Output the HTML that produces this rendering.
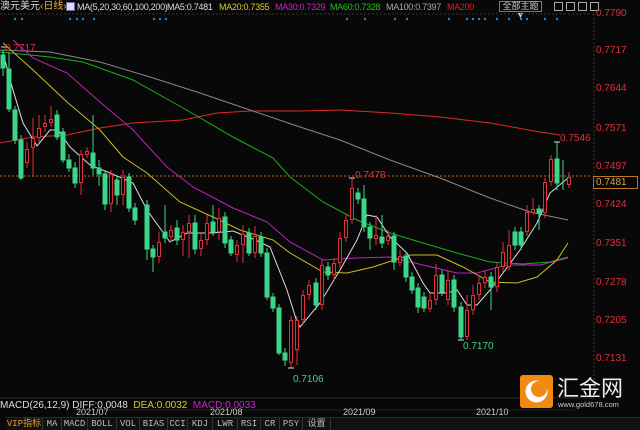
<!DOCTYPE html>
<html><head><meta charset="utf-8"><style>
*{margin:0;padding:0;box-sizing:border-box}
body{width:640px;height:430px;background:#080808;overflow:hidden;position:relative;font-family:"Liberation Sans","Noto Sans CJK SC",sans-serif}
.t{position:absolute;white-space:nowrap;font-size:10px;line-height:12px}
.h{position:absolute;white-space:nowrap;font-size:9px;letter-spacing:-0.3px;line-height:12px;top:1px}
.ax{position:absolute;left:596px;font-size:10px;color:#e0303a;line-height:12px}
.tab{position:absolute;top:418px;height:12px;font-size:9px;line-height:12px;color:#bbb;text-align:center;border-right:1px solid #333;font-family:"Liberation Mono","Noto Sans CJK SC",monospace}
</style></head><body>
<div class="t" style="left:0;top:1px;color:#ddd">澳元美元<span style="color:#e8b040">‹日线›</span></div>
<div style="position:absolute;left:66px;top:2px;width:9px;height:9px;background:#dde;border:1px solid #66a"></div>
<div class="h" style="left:77px;color:#ddd">MA(5,20,30,60,100,200)</div>
<div class="h" style="left:167px;color:#ddd">MA5:0.7481</div>
<div class="h" style="left:219px;color:#d8d020">MA20:0.7355</div>
<div class="h" style="left:275px;color:#d020d0">MA30:0.7329</div>
<div class="h" style="left:330px;color:#20c020">MA60:0.7328</div>
<div class="h" style="left:386px;color:#aaa">MA100:0.7397</div>
<div class="h" style="left:447px;color:#e02020">MA200</div>
<div style="position:absolute;left:499px;top:1px;width:43px;height:11px;border:1px solid #777;color:#ccc;font-size:9px;line-height:9px;text-align:center">全部主题▼</div>
<div style="position:absolute;left:554px;top:2px;width:9px;height:9px;border:1px solid #aaa"></div>
<div style="position:absolute;left:566px;top:2px;width:9px;height:9px;border:1px solid #aaa"></div>
<div style="position:absolute;left:578px;top:2px;width:9px;height:9px;border:1px solid #aaa"></div>
<div style="position:absolute;left:590px;top:2px;width:9px;height:9px;border:1px solid #aaa"></div>

<div class="ax" style="top:8px">0.7790</div>
<div class="ax" style="top:45px">0.7717</div>
<div class="ax" style="top:83px">0.7644</div>
<div class="ax" style="top:123px">0.7571</div>
<div class="ax" style="top:161px">0.7497</div>
<div class="ax" style="top:199px">0.7424</div>
<div class="ax" style="top:238px">0.7351</div>
<div class="ax" style="top:277px">0.7278</div>
<div class="ax" style="top:315px">0.7205</div>
<div class="ax" style="top:353px">0.7131</div>
<div style="position:absolute;left:593px;top:176px;width:45px;height:13px;border:1px solid #c07820;color:#e0a040;font-size:10px;line-height:11px;padding-left:2px;background:#080808">0.7481</div>

<svg style="position:absolute;left:0;top:0" width="640" height="430">
<line x1="0" y1="14" x2="594" y2="14" stroke="#333" stroke-dasharray="2,2"/>
<line x1="594" y1="14" x2="594" y2="398" stroke="#333" stroke-dasharray="2,2"/>
<g fill="#1a8ad8">
<circle cx="15" cy="19" r="1.2"/><circle cx="22" cy="19" r="1.2"/><circle cx="70" cy="19" r="1.2"/><circle cx="77" cy="19" r="1.2"/><circle cx="83" cy="19" r="1.2"/><circle cx="94" cy="19" r="1.2"/><circle cx="154" cy="19" r="1.2"/><circle cx="160" cy="19" r="1.2"/><circle cx="166" cy="19" r="1.2"/>
<circle cx="347" cy="19" r="1.2"/><circle cx="365" cy="19" r="1.2"/><circle cx="395" cy="19" r="1.2"/><circle cx="407" cy="19" r="1.2"/><circle cx="449" cy="19" r="1.2"/><circle cx="467" cy="19" r="1.2"/><circle cx="473" cy="19" r="1.2"/><circle cx="479" cy="19" r="1.2"/><circle cx="485" cy="19" r="1.2"/><circle cx="497" cy="19" r="1.2"/><circle cx="509" cy="19" r="1.2"/><circle cx="521" cy="19" r="1.2"/><circle cx="527" cy="19" r="1.2"/><circle cx="545" cy="19" r="1.2"/><circle cx="557" cy="19" r="1.2"/>
</g>
<line x1="0" y1="176" x2="592" y2="176" stroke="#c06a20" stroke-dasharray="2,2"/>
<g fill="none" stroke-width="1">
<polyline stroke="#e02828" points="0,143 33,137 67,135 100,128 133,123 183,120 217,113 250,111 300,111 340,110 390,113 440,117 490,123 540,132 560,135"/>
<polyline stroke="#888" points="0,50 50,52 100,62 150,77 200,93 250,110 300,127 340,140 390,160 440,178 490,198 530,212 568,220"/>
<polyline stroke="#18b018" points="0,52 50,57 83,62 133,80 183,108 233,137 273,158 290,177 323,202 357,220 390,233 423,243 457,253 490,262 523,264 550,262 568,257"/>
<polyline stroke="#c020c0" points="13,40 33,58 67,73 100,102 133,130 167,167 193,187 233,208 267,222 290,242 323,260 357,258 390,257 423,265 457,273 477,273 507,265 540,265 568,258"/>
<polyline stroke="#c8c020" points="3,43 33,70 67,102 100,130 123,157 147,173 180,202 213,217 240,230 273,240 290,253 323,272 347,273 373,267 410,255 437,255 463,267 490,282 517,283 537,277 557,260 568,243"/>
<polyline stroke="#ddd" points="3,53 13,90 23,123 37,146 50,130 58,130 70,147 90,165 110,173 133,183 147,210 170,242 187,233 213,233 233,231 253,239 270,247 287,290 297,322 300,327 320,303 340,270 357,240 367,215 377,217 390,237 407,253 423,283 430,293 447,293 457,290 467,305 477,305 490,290 503,273 520,250 537,223 550,193 568,178"/>
</g>
<g stroke-width="1">
<g stroke="#3cd68a" fill="#3cd68a">
<line x1="3" y1="50" x2="3" y2="76"/><rect x="1" y="55" width="4" height="13"/>
<line x1="9" y1="52" x2="9" y2="112"/><rect x="7" y="69" width="4" height="40"/>
<line x1="15" y1="106" x2="15" y2="144"/><rect x="13" y="110" width="4" height="30"/>
<line x1="21" y1="135" x2="21" y2="180"/><rect x="19" y="140" width="4" height="38"/>
<line x1="57" y1="110" x2="57" y2="140"/><rect x="55" y="115" width="4" height="22"/>
<line x1="63" y1="128" x2="63" y2="163"/><rect x="61" y="132" width="4" height="28"/>
<line x1="69" y1="154" x2="69" y2="172"/><rect x="67" y="160" width="4" height="8"/>
<line x1="75" y1="162" x2="75" y2="188"/><rect x="73" y="168" width="4" height="15"/>
<line x1="93" y1="115" x2="93" y2="175"/><rect x="91" y="153" width="4" height="15"/>
<line x1="99" y1="160" x2="99" y2="186"/><rect x="97" y="168" width="4" height="6"/>
<line x1="105" y1="170" x2="105" y2="210"/><rect x="103" y="174" width="4" height="30"/>
<line x1="117" y1="176" x2="117" y2="205"/><rect x="115" y="180" width="4" height="15"/>
<line x1="129" y1="173" x2="129" y2="212"/><rect x="127" y="177" width="4" height="31"/>
<line x1="135" y1="203" x2="135" y2="225"/><rect x="133" y="208" width="4" height="12"/>
<line x1="147" y1="200" x2="147" y2="260"/><rect x="145" y="205" width="4" height="44"/>
<line x1="153" y1="245" x2="153" y2="272"/><rect x="151" y="249" width="4" height="8"/>
<line x1="165" y1="205" x2="165" y2="243"/><rect x="163" y="232" width="4" height="6"/>
<line x1="177" y1="220" x2="177" y2="245"/><rect x="175" y="228" width="4" height="12"/>
<line x1="195" y1="215" x2="195" y2="254"/><rect x="193" y="223" width="4" height="26"/>
<line x1="213" y1="205" x2="213" y2="236"/><rect x="211" y="222" width="4" height="10"/>
<line x1="225" y1="212" x2="225" y2="248"/><rect x="223" y="217" width="4" height="26"/>
<line x1="231" y1="236" x2="231" y2="256"/><rect x="229" y="240" width="4" height="13"/>
<line x1="249" y1="228" x2="249" y2="256"/><rect x="247" y="233" width="4" height="20"/>
<line x1="261" y1="232" x2="261" y2="257"/><rect x="259" y="237" width="4" height="16"/>
<line x1="267" y1="248" x2="267" y2="300"/><rect x="265" y="253" width="4" height="44"/>
<line x1="273" y1="293" x2="273" y2="312"/><rect x="271" y="297" width="4" height="11"/>
<line x1="279" y1="304" x2="279" y2="355"/><rect x="277" y="308" width="4" height="45"/>
<line x1="285" y1="348" x2="285" y2="366"/><rect x="283" y="353" width="4" height="7"/>
<line x1="316" y1="278" x2="316" y2="310"/><rect x="314" y="283" width="4" height="22"/>
<line x1="328" y1="262" x2="328" y2="280"/><rect x="326" y="267" width="4" height="8"/>
<line x1="358" y1="188" x2="358" y2="204"/><rect x="356" y="193" width="4" height="6"/>
<line x1="364" y1="185" x2="364" y2="232"/><rect x="362" y="199" width="4" height="28"/>
<line x1="370" y1="222" x2="370" y2="250"/><rect x="368" y="227" width="4" height="11"/>
<line x1="382" y1="215" x2="382" y2="248"/><rect x="380" y="237" width="4" height="6"/>
<line x1="394" y1="232" x2="394" y2="270"/><rect x="392" y="236" width="4" height="26"/>
<line x1="406" y1="252" x2="406" y2="282"/><rect x="404" y="256" width="4" height="21"/>
<line x1="412" y1="272" x2="412" y2="294"/><rect x="410" y="277" width="4" height="13"/>
<line x1="418" y1="283" x2="418" y2="313"/><rect x="416" y="288" width="4" height="19"/>
<line x1="424" y1="292" x2="424" y2="312"/><rect x="422" y="297" width="4" height="11"/>
<line x1="442" y1="270" x2="442" y2="296"/><rect x="440" y="275" width="4" height="17"/>
<line x1="454" y1="275" x2="454" y2="312"/><rect x="452" y="280" width="4" height="27"/>
<line x1="461" y1="302" x2="461" y2="340"/><rect x="459" y="307" width="4" height="30"/>
<line x1="491" y1="272" x2="491" y2="310"/><rect x="489" y="277" width="4" height="10"/>
<line x1="515" y1="227" x2="515" y2="250"/><rect x="513" y="232" width="4" height="13"/>
<line x1="521" y1="227" x2="521" y2="250"/><rect x="519" y="232" width="4" height="13"/>
<line x1="539" y1="205" x2="539" y2="230"/><rect x="537" y="209" width="4" height="4"/>
<line x1="557" y1="142" x2="557" y2="190"/><rect x="555" y="159" width="4" height="24"/>
<line x1="563" y1="160" x2="563" y2="190"/>
</g>
<g stroke="#e0303a" fill="#080808">
<line x1="27" y1="142" x2="27" y2="168"/><rect x="25.5" y="149.5" width="3" height="13"/>
<line x1="33" y1="118" x2="33" y2="177"/><rect x="31.5" y="138.5" width="3" height="9"/>
<line x1="39" y1="115" x2="39" y2="142"/><rect x="37.5" y="128.5" width="3" height="9"/>
<line x1="45" y1="115" x2="45" y2="132"/><rect x="43.5" y="123.5" width="3" height="3"/>
<line x1="51" y1="106" x2="51" y2="127"/><rect x="49.5" y="119.5" width="3" height="3"/>
<line x1="81" y1="150" x2="81" y2="195"/><rect x="79.5" y="154.5" width="3" height="28"/>
<line x1="87" y1="147" x2="87" y2="158"/><rect x="85.5" y="151.5" width="3" height="3"/>
<line x1="111" y1="170" x2="111" y2="212"/><rect x="109.5" y="174.5" width="3" height="29"/>
<line x1="123" y1="170" x2="123" y2="205"/><rect x="121.5" y="177.5" width="3" height="17"/>
<line x1="159" y1="232" x2="159" y2="263"/><rect x="157.5" y="242.5" width="3" height="14"/>
<line x1="171" y1="225" x2="171" y2="242"/><rect x="169.5" y="230.5" width="3" height="6"/>
<line x1="183" y1="225" x2="183" y2="256"/><rect x="181.5" y="232.5" width="3" height="7"/>
<line x1="189" y1="215" x2="189" y2="258"/><rect x="187.5" y="223.5" width="3" height="8"/>
<line x1="201" y1="234" x2="201" y2="256"/><rect x="199.5" y="240.5" width="3" height="8"/>
<line x1="207" y1="215" x2="207" y2="245"/><rect x="205.5" y="223.5" width="3" height="16"/>
<line x1="219" y1="208" x2="219" y2="240"/><rect x="217.5" y="218.5" width="3" height="13"/>
<line x1="237" y1="240" x2="237" y2="262"/><rect x="235.5" y="245.5" width="3" height="9"/>
<line x1="243" y1="225" x2="243" y2="263"/><rect x="241.5" y="234.5" width="3" height="10"/>
<line x1="255" y1="226" x2="255" y2="258"/><rect x="253.5" y="236.5" width="3" height="16"/>
<line x1="291" y1="316" x2="291" y2="368"/><rect x="289.5" y="320.5" width="3" height="42"/>
<line x1="297" y1="316" x2="297" y2="365"/><rect x="295.5" y="320.5" width="3" height="29"/>
<line x1="303" y1="290" x2="303" y2="325"/><rect x="301.5" y="295.5" width="3" height="24"/>
<line x1="309" y1="280" x2="309" y2="300"/><rect x="307.5" y="285.5" width="3" height="9"/>
<line x1="322" y1="260" x2="322" y2="310"/><rect x="320.5" y="265.5" width="3" height="39"/>
<line x1="334" y1="258" x2="334" y2="280"/><rect x="332.5" y="263.5" width="3" height="11"/>
<line x1="340" y1="232" x2="340" y2="268"/><rect x="338.5" y="238.5" width="3" height="24"/>
<line x1="346" y1="214" x2="346" y2="242"/><rect x="344.5" y="220.5" width="3" height="17"/>
<line x1="352" y1="178" x2="352" y2="224"/><rect x="350.5" y="188.5" width="3" height="31"/>
<line x1="376" y1="215" x2="376" y2="245"/><rect x="374.5" y="235.5" width="3" height="3"/>
<line x1="388" y1="230" x2="388" y2="245"/><rect x="386.5" y="236.5" width="3" height="4"/>
<line x1="400" y1="250" x2="400" y2="266"/><rect x="398.5" y="256.5" width="3" height="6"/>
<line x1="430" y1="294" x2="430" y2="312"/><rect x="428.5" y="300.5" width="3" height="8"/>
<line x1="436" y1="264" x2="436" y2="305"/><rect x="434.5" y="275.5" width="3" height="24"/>
<line x1="448" y1="270" x2="448" y2="305"/><rect x="446.5" y="280.5" width="3" height="19"/>
<line x1="467" y1="295" x2="467" y2="340"/><rect x="465.5" y="310.5" width="3" height="26"/>
<line x1="473" y1="285" x2="473" y2="315"/><rect x="471.5" y="295.5" width="3" height="14"/>
<line x1="479" y1="275" x2="479" y2="300"/><rect x="477.5" y="283.5" width="3" height="11"/>
<line x1="485" y1="270" x2="485" y2="288"/><rect x="483.5" y="277.5" width="3" height="5"/>
<line x1="497" y1="262" x2="497" y2="292"/><rect x="495.5" y="267.5" width="3" height="19"/>
<line x1="503" y1="242" x2="503" y2="272"/><rect x="501.5" y="252.5" width="3" height="14"/>
<line x1="509" y1="230" x2="509" y2="270"/><rect x="507.5" y="245.5" width="3" height="21"/>
<line x1="527" y1="205" x2="527" y2="236"/><rect x="525.5" y="212.5" width="3" height="19"/>
<line x1="533" y1="198" x2="533" y2="215"/><rect x="531.5" y="209.5" width="3" height="3"/>
<line x1="545" y1="178" x2="545" y2="218"/><rect x="543.5" y="182.5" width="3" height="30"/>
<line x1="551" y1="155" x2="551" y2="186"/><rect x="549.5" y="159.5" width="3" height="22"/>
<line x1="569" y1="172" x2="569" y2="188"/><rect x="567.5" y="177.5" width="3" height="7"/>
</g>
</g>
<g stroke="#ddd"><line x1="554" y1="142" x2="560" y2="142"/><line x1="349" y1="178" x2="355" y2="178"/><line x1="458" y1="340" x2="464" y2="340"/><line x1="288" y1="368" x2="294" y2="368"/><line x1="1" y1="47" x2="7" y2="47"/></g>
<text x="5" y="51" fill="#e0303a" font-size="10" font-family="Liberation Sans">0.7717</text>
<text x="355" y="178" fill="#e0303a" font-size="10" font-family="Liberation Sans">0.7478</text>
<text x="560" y="141" fill="#e0303a" font-size="10" font-family="Liberation Sans">0.7546</text>
<text x="463" y="349" fill="#3cd68a" font-size="10" font-family="Liberation Sans">0.7170</text>
<text x="293" y="382" fill="#3cd68a" font-size="10" font-family="Liberation Sans">0.7106</text>
<line x1="0" y1="398" x2="594" y2="398" stroke="#2a2a2a"/>
<line x1="75" y1="410" x2="575" y2="410" stroke="#222"/>
</svg>

<div style="position:absolute;left:520px;top:375px;width:33px;height:33px;background:#f08a10;border-radius:3px"></div>
<svg style="position:absolute;left:520px;top:375px" width="33" height="33"><circle cx="16.5" cy="16.5" r="11" fill="#fff"/><circle cx="19" cy="14" r="8" fill="#f08a10"/></svg>
<div class="t" style="left:557px;top:374px;font-size:22px;line-height:26px;color:#eee;font-family:'Noto Sans CJK SC',sans-serif">汇金网</div>
<div class="t" style="left:558px;top:400px;font-size:7.5px;line-height:9px;color:#ccc">www.gold678.com</div>

<div class="t" style="left:0;top:400px;color:#ddd;font-size:10px">MACD(26,12,9) DIFF:0.0048 <span style="color:#d8d020">&nbsp;DEA:0.0032</span> <span style="color:#d020d0">&nbsp;MACD:0.0033</span></div>
<div class="t" style="left:76px;top:406px;color:#ccc;font-size:9px">2021/07</div>
<div class="t" style="left:210px;top:406px;color:#ccc;font-size:9px">2021/08</div>
<div class="t" style="left:343px;top:406px;color:#ccc;font-size:9px">2021/09</div>
<div class="t" style="left:476px;top:406px;color:#ccc;font-size:9px">2021/10</div>

<div style="position:absolute;left:6px;top:417px;width:634px;height:13px;background:#111;border-top:1px solid #2a2a2a"></div>
<div class="tab" style="left:6px;width:37px;color:#e8a020">VIP指标</div>
<div class="tab" style="left:43px;width:19px">MA</div>
<div class="tab" style="left:62px;width:26px">MACD</div>
<div class="tab" style="left:88px;width:29px">BOLL</div>
<div class="tab" style="left:117px;width:23px">VOL</div>
<div class="tab" style="left:140px;width:28px">BIAS</div>
<div class="tab" style="left:168px;width:20px">CCI</div>
<div class="tab" style="left:188px;width:25px">KDJ</div>
<div class="tab" style="left:213px;width:25px">LWR</div>
<div class="tab" style="left:238px;width:23px">RSI</div>
<div class="tab" style="left:261px;width:19px">CR</div>
<div class="tab" style="left:280px;width:23px">PSY</div>
<div class="tab" style="left:303px;width:28px">设置</div>
</body></html>
